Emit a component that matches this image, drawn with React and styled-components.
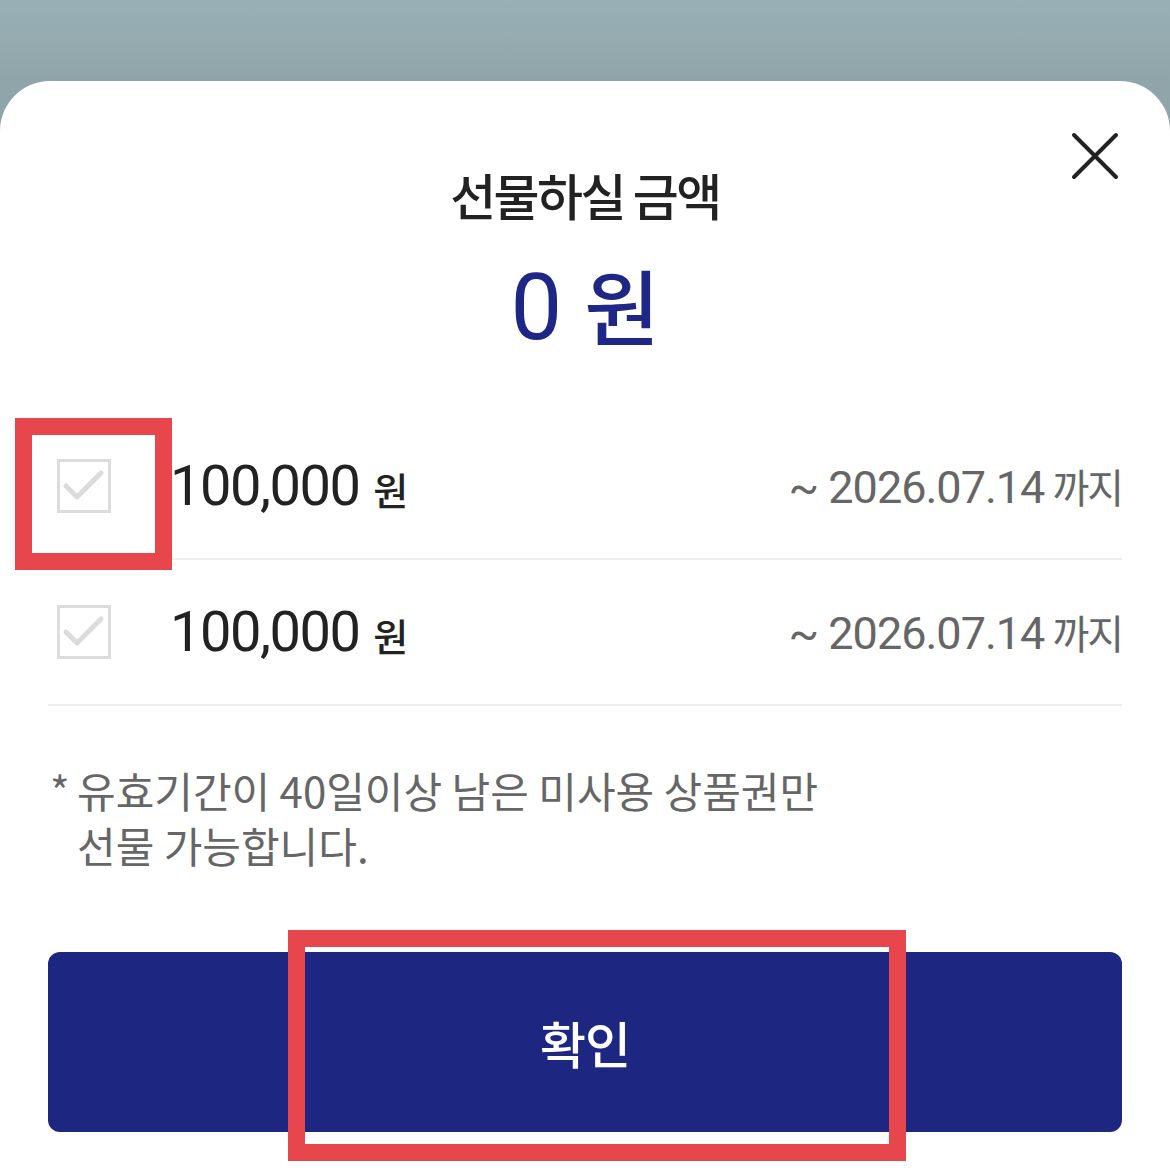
import styled, { createGlobalStyle } from "styled-components";

const GlobalStyle = createGlobalStyle`
    body {
        margin: 0;
        background: linear-gradient(to bottom, #99b0b6 0px, #8fa5aa 81px, #8fa5aa 100%);
        font-family: "Noto Sans CJK KR", "Noto Sans", sans-serif;
    }
`;

const Page = styled.div`
    position: relative;
    min-height: 1170px;
    padding-top: 81px;
    box-sizing: border-box;
    overflow: hidden;
`;

const Sheet = styled.section`
    background-color: #fff;
    border-radius: 50px 50px 0 0;
    min-height: 1089px;
    padding: 0 48px 40px;
    box-sizing: border-box;
`;

const Header = styled.header`
    display: grid;
    grid-template-columns: 1fr auto 1fr;
    align-items: start;
    padding-top: 48px;
`;

const CloseButton = styled.button`
    grid-column: 3;
    justify-self: end;
    width: 54px;
    height: 54px;
    padding: 0;
    border: none;
    background: none;
    cursor: pointer;
`;

const Title = styled.h2`
    grid-column: 2;
    grid-row: 1;
    margin: 33px 0 0;
    font-size: 50px;
    line-height: 64px;
    font-weight: 500;
    letter-spacing: -2.5px;
    color: #222;
`;

const Amount = styled.div`
    margin-top: 28px;
    text-align: center;
    font-family: "Roboto", "Noto Sans CJK KR", sans-serif;
    font-size: 92px;
    line-height: 100px;
    font-weight: 400;
    color: #1e2785;

    > span {
        font-family: "Noto Sans CJK KR", sans-serif;
        font-size: 82px;
        font-weight: 500;
        margin-left: 22px;
    }
`;

const Vouchers = styled.ul`
    list-style: none;
    margin: 56px 0 0;
    padding: 0;
`;

const Voucher = styled.li`
    display: flex;
    align-items: center;
    height: 144px;
    border-bottom: 2px solid #eeeff3;
`;

const CheckBox = styled.span`
    display: flex;
    align-items: center;
    justify-content: center;
    width: 54px;
    height: 54px;
    margin: 0 59px 0 9px;
    border: 3px solid #dcdcdc;
    box-sizing: border-box;
    background: ${props => props.checked ? "#1e2785" : "#fff"};
`;

const Price = styled.div`
    font-family: "Roboto", "Noto Sans CJK KR", sans-serif;
    font-size: 56px;
    letter-spacing: -1.5px;
    color: #222;

    > span {
        font-family: "Noto Sans CJK KR", sans-serif;
        font-size: 38px;
        font-weight: 500;
        margin-left: 14px;
        letter-spacing: 0;
    }
`;

const Expiry = styled.div`
    margin-left: auto;
    font-family: "Roboto", "Noto Sans CJK KR", sans-serif;
    font-size: 45px;
    letter-spacing: -1px;
    color: #666;

    > span {
        font-family: "Noto Sans CJK KR", sans-serif;
        font-size: 40px;
        letter-spacing: -2px;
        margin-left: 8px;
    }
`;

const Notice = styled.p`
    display: flex;
    margin: 56px 0 0 2px;
    font-size: 42px;
    line-height: 55px;
    letter-spacing: 0;
    color: #666;

    > b {
        width: 27px;
        flex-shrink: 0;
        font-weight: 400;
    }
`;

const ConfirmButton = styled.button`
    display: block;
    width: 100%;
    height: 180px;
    margin-top: 80px;
    border: none;
    border-radius: 12px;
    background-color: #1d2680;
    color: #fff;
    font-family: "Noto Sans CJK KR", sans-serif;
    font-size: 50px;
    font-weight: 500;
    letter-spacing: -1px;
    cursor: pointer;
`;

const Highlight = styled.div`
    position: absolute;
    left: ${props => props.x}px;
    top: ${props => props.y}px;
    width: ${props => props.w}px;
    height: ${props => props.h}px;
    border: 17px solid #e8464d;
    box-sizing: border-box;
    pointer-events: none;
`;

const CloseIcon = () => (
    <svg width="54" height="54" viewBox="0 0 54 54">
        <path d="M6 6 L48 48 M48 6 L6 48" stroke="#222" strokeWidth="4" strokeLinecap="round" />
    </svg>
);

const CheckIcon = ({color}) => (
    <svg width="48" height="48" viewBox="0 0 48 48">
        <path d="M6 24 L17 35 L41 11" fill="none" stroke={color} strokeWidth="5" strokeLinecap="round" strokeLinejoin="round" />
    </svg>
);

const vouchers = [
    { id: 1, amount: 100000, until: "2026.07.14", checked: false },
    { id: 2, amount: 100000, until: "2026.07.14", checked: false },
];

const App = () => {
    const total = vouchers.filter(v => v.checked).reduce((sum, v) => sum + v.amount, 0);

    return (
        <Page>
            <GlobalStyle />
            <Sheet>
                <Header>
                    <Title>선물하실 금액</Title>
                    <CloseButton aria-label="닫기"><CloseIcon /></CloseButton>
                </Header>
                <Amount>{total.toLocaleString()}<span>원</span></Amount>
                <Vouchers>
                    {vouchers.map(voucher =>
                        <Voucher key={voucher.id}>
                            <CheckBox checked={voucher.checked}>
                                <CheckIcon color={voucher.checked ? "#fff" : "#dcdcdc"} />
                            </CheckBox>
                            <Price>{voucher.amount.toLocaleString()}<span>원</span></Price>
                            <Expiry>~ {voucher.until}<span>까지</span></Expiry>
                        </Voucher>
                    )}
                </Vouchers>
                <Notice>
                    <b>*</b>
                    <span>유효기간이 40일이상 남은 미사용 상품권만<br />선물 가능합니다.</span>
                </Notice>
                <ConfirmButton>확인</ConfirmButton>
            </Sheet>
            <Highlight x={15} y={418} w={157} h={152} />
            <Highlight x={288} y={930} w={618} h={231} />
        </Page>
    );
}

export default App;
